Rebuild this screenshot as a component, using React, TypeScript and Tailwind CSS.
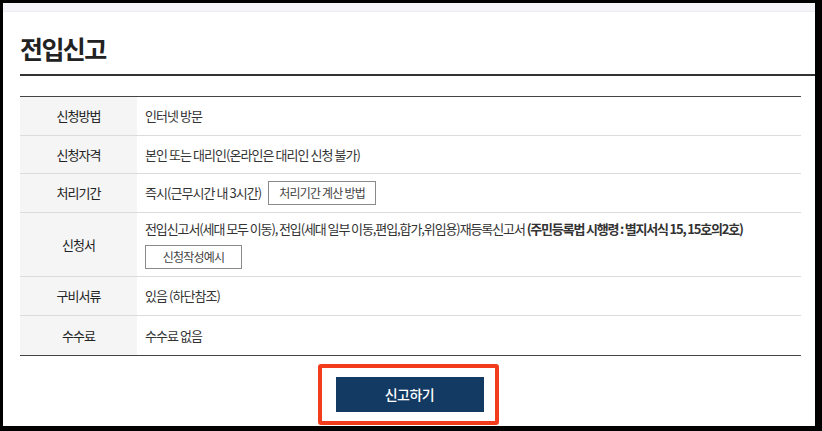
import React from 'react';

const font = { fontFamily: '"Noto Sans CJK KR", "Noto Sans", sans-serif' };

type Row = { label: string; content: React.ReactNode; tall?: boolean };

function SmallButton({ children, className = '' }: { children: React.ReactNode; className?: string }) {
  return (
    <button
      type="button"
      className={`h-6 border border-[#8a8a8a] bg-white text-[12px] tracking-[-0.8px] text-[#444] ${className}`}
    >
      {children}
    </button>
  );
}

const rows: Row[] = [
  { label: '신청방법', content: '인터넷 방문' },
  { label: '신청자격', content: '본인 또는 대리인(온라인은 대리인 신청 불가)' },
  {
    label: '처리기간',
    content: (
      <div className="flex items-center gap-[7px]">
        <span>즉시(근무시간 내 3시간)</span>
        <SmallButton className="px-[10px]">처리기간 계산 방법</SmallButton>
      </div>
    ),
  },
  {
    label: '신청서',
    tall: true,
    content: (
      <div className="flex flex-col items-start gap-2">
        <p className="leading-4 tracking-[-1.1px]">
          전입신고서(세대 모두 이동), 전입(세대 일부 이동,편입,합가,위임용)재등록신고서{' '}
          <b className="font-bold tracking-[-1.2px]">(주민등록법 시행령 : 별지서식 15, 15호의2호)</b>
        </p>
        <SmallButton className="w-[97px]">신청작성예시</SmallButton>
      </div>
    ),
  },
  { label: '구비서류', content: '있음 (하단참조)' },
  { label: '수수료', content: '수수료 없음' },
];

export default function App() {
  return (
    <div className="w-[822px] h-[431px] bg-black pt-[3px] pl-[3px] pr-[7px] pb-[5px]" style={font}>
      <div className="flex h-full flex-col bg-white">
        <div className="h-[9px] border-b border-[#ececf2] bg-[#f4f4f9]" />
        <h1 className="pl-[17px] pt-[20px] text-[25px] font-bold leading-[32px] tracking-[-1.6px] text-[#222]">
          전입신고
        </h1>
        <div className="ml-[17px] mt-[10px] h-[2px] bg-[#333]" />
        <div className="ml-[17px] mr-[14px] mt-[20px] border-t border-b border-[#444] text-[13px] tracking-[-0.95px] text-[#333]">
          {rows.map((r, i) => (
            <div
              key={r.label}
              className={`flex ${r.tall ? 'h-[64px]' : i === 1 ? 'h-[38px]' : 'h-[39px]'} ${
                i < rows.length - 1 ? 'border-b border-[#dcdcdc]' : ''
              }`}
            >
              <div className="flex w-[117px] shrink-0 items-center justify-center bg-[#f5f5f5] text-[#222]">
                {r.label}
              </div>
              <div className="flex flex-1 items-center pl-[8px]">{r.content}</div>
            </div>
          ))}
        </div>
        <div className="mt-[8px] flex justify-center pr-[2px]">
          <div className="rounded-[3px] border-4 border-[#f23c1c] pl-[14px] pr-[11px] pt-[9px] pb-[9px]">
            <button
              type="button"
              className="h-[35px] w-[148px] bg-[#133a62] text-[14px] font-medium tracking-[-0.5px] text-white"
            >
              신고하기
            </button>
          </div>
        </div>
      </div>
    </div>
  );
}
